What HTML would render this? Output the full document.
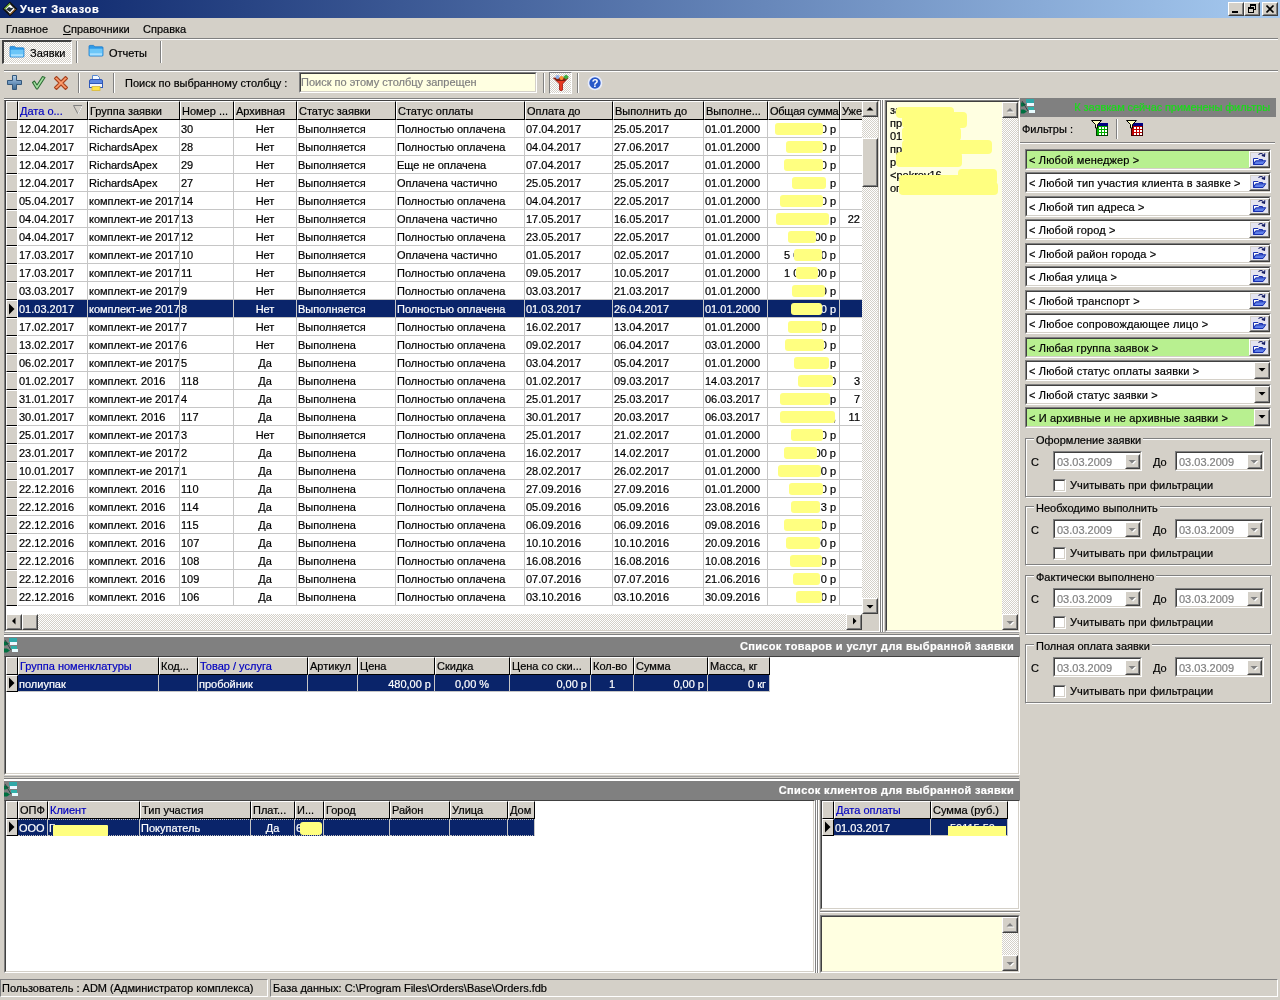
<!DOCTYPE html><html lang="ru"><head><meta charset="utf-8"><title>Учет Заказов</title><style>
*{box-sizing:border-box;margin:0;padding:0}
html,body{width:1280px;height:1000px;overflow:hidden}
body{background:#d4d0c8;font-family:"Liberation Sans",sans-serif;font-size:11px;color:#000;position:relative;line-height:13px;-webkit-text-stroke:0.2px}
.a{position:absolute;white-space:nowrap}
.sunk{position:absolute;border:1px solid;border-color:#808080 #fff #fff #808080}
.sunk2{position:absolute;left:0;top:0;right:0;bottom:0;border:1px solid;border-color:#404040 #d4d0c8 #d4d0c8 #404040}
.rais{position:absolute;border:1px solid;border-color:#fff #404040 #404040 #fff;background:#d4d0c8}
.rais:after{content:"";position:absolute;left:0;top:0;right:0;bottom:0;border:1px solid;border-color:#d4d0c8 #808080 #808080 #d4d0c8}
.hd{position:absolute;background:#d4d0c8;border:1px solid;border-color:#fff #000 #000 #fff;overflow:hidden;white-space:nowrap;padding:3px 0 0 1px;height:19px}
.hd.s{height:18px;padding-top:2px}
.hd.b{color:#0000c0}
.c{position:absolute;overflow:hidden;white-space:nowrap;height:18px;padding:3px 0 0 1px;border-right:1px solid #c6c6c6;border-bottom:1px solid #c6c6c6;background:#fff}
.c.s{height:17px}
.c.ctr{text-align:center;padding-left:0}
.c.rt{text-align:right;padding-right:3px}
.sel .c{background:#0a246a;color:#fff}
.ind{position:absolute;background:#d4d0c8;border:1px solid;border-color:#fff #000 #000 #fff}
.sbtrack{position:absolute;background-color:#fff;background-image:linear-gradient(45deg,#d4d0c8 25%,transparent 25%,transparent 75%,#d4d0c8 75%),linear-gradient(45deg,#d4d0c8 25%,transparent 25%,transparent 75%,#d4d0c8 75%);background-size:2px 2px;background-position:0 0,1px 1px}
.yl{position:absolute;background:#ffff80;border-radius:3px}
.gbar{position:absolute;background:#808080;color:#fff;font-weight:bold;text-align:right;height:19px;padding:3px 6px 0 0;letter-spacing:0.35px}
.grp{position:absolute;border:1px solid;border-color:#808080 #fff #fff #808080;box-shadow:inset 1px 1px 0 #fff,-1px -1px 0 transparent}
.grp:before{content:"";position:absolute;left:-1px;top:-1px;right:0;bottom:0;border:1px solid;border-color:transparent #808080 #808080 transparent}
.grp>span{position:absolute;left:8px;top:-5px;background:#d4d0c8;padding:0 2px;z-index:2}
.vl{position:absolute;width:1px}
.hl{position:absolute;height:1px}
</style></head><body><div id="w" style="position:absolute;left:0;top:0;width:1280px;height:1000px;will-change:transform">
<div class="a" style="left:0;top:0;width:1280px;height:18px;background:linear-gradient(90deg,#0a246a 0%,#a6caf0 100%)"></div>
<svg class="a" style="left:2px;top:1px" width="16" height="16" viewBox="0 0 16 16"><polygon points="8,0.5 15.5,8 8,15.5 0.5,8" fill="#111"/><polygon points="8,3.200 12.800,8 8,12.800 3.200,8" fill="#fff"/><path d="M4 8.500 L7 6 L9 7 L12 6.500 L8 11Z" fill="#26323e"/><path d="M2.500 8 L8 2.500" stroke="#7fbf3f" stroke-width="1.2" fill="none"/><path d="M8 13.500 L13.500 8" stroke="#d08030" stroke-width="1" fill="none"/></svg>
<div class="a" style="left:20px;top:3px;color:#fff;font-weight:bold;font-size:11px;letter-spacing:0.7px">Учет Заказов</div>
<div class="rais" style="left:1228px;top:2px;width:16px;height:14px"><div class="a" style="left:3px;top:8px;width:6px;height:2px;background:#000"></div></div>
<div class="rais" style="left:1244px;top:2px;width:16px;height:14px"><div class="a" style="left:5px;top:1px;width:6px;height:6px;border:1px solid #000;border-top-width:2px"></div><div class="a" style="left:3px;top:4px;width:6px;height:6px;border:1px solid #000;border-top-width:2px;background:#d4d0c8"></div></div>
<div class="rais" style="left:1262px;top:2px;width:16px;height:14px"><svg class="a" style="left:3px;top:2px" width="9" height="8" viewBox="0 0 9 8"><path d="M0.5 0.5 L7.5 7.5 M7.5 0.5 L0.5 7.5" stroke="#000" stroke-width="1.6"/></svg></div>
<div class="a" style="left:6px;top:23px">Главное</div>
<div class="a" style="left:63px;top:23px"><u>С</u>правочники</div>
<div class="a" style="left:143px;top:23px">Справка</div>
<div class="hl" style="left:0px;top:38px;width:1278px;background:#808080"></div><div class="hl" style="left:0px;top:39px;width:1278px;background:#fff"></div>
<div class="sbtrack" style="left:2px;top:40px;width:70px;height:24px;border-style:solid;border-width:2px 1px 1px 2px;border-color:#404040 #fff #fff #404040"></div>
<svg class="a" style="left:9px;top:45px" width="16" height="13" viewBox="0 0 16 14" preserveAspectRatio="none"><path d="M1 2.5 Q1 1.5 2 1.5 L5.5 1.5 L7 3 L14 3 Q15 3 15 4 L15 12 Q15 13 14 13 L2 13 Q1 13 1 12Z" fill="#2f9be8" stroke="#1a78c8" stroke-width="0.8"/><path d="M1.5 5 L14.5 5 L14.5 12 Q14.5 12.5 14 12.5 L2 12.5 Q1.5 12.5 1.5 12Z" fill="#6cc6f8"/><path d="M2 10 L14 10 L14 12.3 L2 12.3Z" fill="#a8e0ff"/></svg>
<div class="a" style="left:30px;top:47px">Заявки</div>
<div class="vl" style="left:76px;top:41px;height:22px;background:#808080"></div><div class="vl" style="left:77px;top:41px;height:22px;background:#fff"></div>
<svg class="a" style="left:88px;top:44px" width="16" height="13" viewBox="0 0 16 14" preserveAspectRatio="none"><path d="M1 2.5 Q1 1.5 2 1.5 L5.5 1.5 L7 3 L14 3 Q15 3 15 4 L15 12 Q15 13 14 13 L2 13 Q1 13 1 12Z" fill="#2f9be8" stroke="#1a78c8" stroke-width="0.8"/><path d="M1.5 5 L14.5 5 L14.5 12 Q14.5 12.5 14 12.5 L2 12.5 Q1.5 12.5 1.5 12Z" fill="#6cc6f8"/><path d="M2 10 L14 10 L14 12.3 L2 12.3Z" fill="#a8e0ff"/></svg>
<div class="a" style="left:109px;top:47px">Отчеты</div>
<div class="vl" style="left:160px;top:41px;height:22px;background:#808080"></div><div class="vl" style="left:161px;top:41px;height:22px;background:#fff"></div>
<div class="hl" style="left:4px;top:70px;width:1274px;background:#808080"></div><div class="hl" style="left:4px;top:71px;width:1274px;background:#fff"></div>
<svg class="a" style="left:7px;top:75px" width="16" height="16" viewBox="0 0 16 16"><defs><linearGradient id="gp" x1="0" y1="0" x2="0" y2="1"><stop offset="0" stop-color="#b8d4ec"/><stop offset="0.5" stop-color="#7098c0"/><stop offset="1" stop-color="#3c6890"/></linearGradient></defs><path d="M5.500 0.500 H9.500 V5.500 H14.500 V9.500 H9.500 V14.500 H5.500 V9.500 H0.500 V5.500 H5.500Z" fill="url(#gp)" stroke="#34587c" stroke-width="1"/></svg>
<svg class="a" style="left:31px;top:75px" width="16" height="16" viewBox="0 0 16 16"><path d="M1.500 7.500 L3.500 6 L6 10 L11.500 1.500 L14 2.500 L6.500 14 L5.500 14Z" fill="#a4e0a0" stroke="#2c6c34" stroke-width="1.1" stroke-linejoin="round"/></svg>
<svg class="a" style="left:53px;top:75px" width="16" height="16" viewBox="0 0 16 16"><path d="M1.500 3.500 L3.500 1.500 L8 6 L12.500 1.500 L14.500 3.500 L10 8 L14.500 12.500 L12.500 14.500 L8 10 L3.500 14.500 L1.500 12.500 L6 8Z" fill="#ff9c6c" stroke="#a84420" stroke-width="1.1" stroke-linejoin="round"/></svg>
<div class="vl" style="left:78px;top:73px;height:20px;background:#808080"></div><div class="vl" style="left:79px;top:73px;height:20px;background:#fff"></div>
<svg class="a" style="left:88px;top:75px" width="16" height="17" viewBox="0 0 16 17"><path d="M4.500 4.500 V0.500 H9.500 L11.500 2.500 V4.500Z" fill="#f4faff" stroke="#5888d0" stroke-width="1"/><rect x="1.500" y="4.500" width="13" height="5" rx="1.500" fill="#5c88e4" stroke="#3058b8" stroke-width="1"/><rect x="1.500" y="8.500" width="13" height="4" fill="#f0f4ff" stroke="#3058b8" stroke-width="1"/><rect x="4" y="11.500" width="8" height="4" fill="#ffe448" stroke="#d8b838" stroke-width="0.8"/></svg>
<div class="vl" style="left:113px;top:73px;height:20px;background:#808080"></div><div class="vl" style="left:114px;top:73px;height:20px;background:#fff"></div>
<div class="a" style="left:125px;top:77px">Поиск по выбранному столбцу :</div>
<div class="sunk" style="left:299px;top:72px;width:238px;height:21px;background:#ffffe1"><div class="sunk2"></div><div class="a" style="left:1px;top:3px;color:#808080">Поиск по этому столбцу запрещен</div></div>
<div class="vl" style="left:543px;top:73px;height:20px;background:#808080"></div><div class="vl" style="left:544px;top:73px;height:20px;background:#fff"></div>
<div class="sbtrack" style="left:549px;top:72px;width:23px;height:22px;border:1px solid;border-color:#808080 #fff #fff #808080"></div>
<svg class="a" style="left:552px;top:74px" width="18" height="18" viewBox="0 0 18 18"><path d="M1.500 4 L16 4 L10.500 10 L10.500 16 Q9 17.500 7.500 16 L7.500 10Z" fill="#e83820" stroke="#a01810" stroke-width="0.8"/><path d="M1.500 4 L16 4 L13 7 L4.500 7Z" fill="#802010"/><circle cx="5.500" cy="3" r="2" fill="#90b0e8"/><circle cx="9.500" cy="4" r="2" fill="#ff9030"/><path d="M14 0.500 L17 3 L14 5.500 L11 3Z" fill="#40b040"/></svg>
<div class="vl" style="left:577px;top:73px;height:20px;background:#808080"></div><div class="vl" style="left:578px;top:73px;height:20px;background:#fff"></div>
<svg class="a" style="left:587px;top:75px" width="16" height="16" viewBox="0 0 16 16"><circle cx="8" cy="8" r="6.500" fill="#2858c8" stroke="#e8eeff" stroke-width="1.6"/><text x="8" y="12" font-size="11" font-weight="bold" font-family="Liberation Sans, sans-serif" text-anchor="middle" fill="#fff">?</text></svg>
<div class="hl" style="left:4px;top:98px;width:1015px;background:#808080"></div><div class="hl" style="left:4px;top:99px;width:1015px;background:#fff"></div>
<div class="a" style="left:4px;top:100px;width:876px;height:532px;background:#fff;border-style:solid;border-width:1px;border-color:#404040 #fff #fff #808080"><div class="a" style="left:0;top:0;right:0;bottom:0;border-style:solid;border-width:0 1px 1px 1px;border-color:#404040 #d4d0c8 #d4d0c8 #404040"></div></div>
<div class="vl" style="left:880px;top:100px;height:532px;background:#808080"></div><div class="vl" style="left:881px;top:100px;height:532px;background:#fff"></div>
<div class="vl" style="left:882px;top:100px;height:532px;background:#808080"></div><div class="vl" style="left:883px;top:100px;height:532px;background:#fff"></div>
<div class="hd " style="left:6px;top:101px;width:12px"></div>
<div class="hd b " style="left:18px;top:101px;width:70px;">Дата о...</div>
<div class="hd  " style="left:88px;top:101px;width:92px;">Группа заявки</div>
<div class="hd  " style="left:180px;top:101px;width:54px;">Номер ...</div>
<div class="hd  " style="left:234px;top:101px;width:63px;">Архивная</div>
<div class="hd  " style="left:297px;top:101px;width:99px;">Статус заявки</div>
<div class="hd  " style="left:396px;top:101px;width:129px;">Статус оплаты</div>
<div class="hd  " style="left:525px;top:101px;width:88px;">Оплата до</div>
<div class="hd  " style="left:613px;top:101px;width:91px;">Выполнить до</div>
<div class="hd  " style="left:704px;top:101px;width:64px;">Выполне...</div>
<div class="hd  " style="left:768px;top:101px;width:72px;letter-spacing:-0.25px;">Общая сумма</div>
<div class="hd  " style="left:840px;top:101px;width:23px;">Уже</div>
<svg class="a" style="left:73px;top:105px" width="11" height="10" viewBox="0 0 11 10"><path d="M0.5 0.5 L9.5 0.5 L5 9Z" fill="none" stroke="#808080" stroke-width="1"/><path d="M9.5 0.5 L5 9" stroke="#fff" stroke-width="1"/></svg>
<div class="">
<div class="ind" style="left:6px;top:120px;width:11px;height:18px;border-right:none"></div>
<div class="c" style="left:18px;top:120px;width:70px;">12.04.2017</div>
<div class="c" style="left:88px;top:120px;width:92px;">RichardsApex</div>
<div class="c" style="left:180px;top:120px;width:54px;">30</div>
<div class="c ctr" style="left:234px;top:120px;width:63px;">Нет</div>
<div class="c" style="left:297px;top:120px;width:99px;">Выполняется</div>
<div class="c" style="left:396px;top:120px;width:129px;">Полностью оплачена</div>
<div class="c" style="left:525px;top:120px;width:88px;">07.04.2017</div>
<div class="c" style="left:613px;top:120px;width:91px;">25.05.2017</div>
<div class="c" style="left:704px;top:120px;width:64px;">01.01.2000</div>
<div class="c rt" style="left:768px;top:120px;width:72px;">0 р</div>
<div class="c rt" style="left:840px;top:120px;width:23px;border-right:none;padding-right:2px;width:22px;"></div>
</div>
<div class="yl" style="left:775px;top:123px;width:48px;height:12px"></div>
<div class="">
<div class="ind" style="left:6px;top:138px;width:11px;height:18px;border-right:none"></div>
<div class="c" style="left:18px;top:138px;width:70px;">12.04.2017</div>
<div class="c" style="left:88px;top:138px;width:92px;">RichardsApex</div>
<div class="c" style="left:180px;top:138px;width:54px;">28</div>
<div class="c ctr" style="left:234px;top:138px;width:63px;">Нет</div>
<div class="c" style="left:297px;top:138px;width:99px;">Выполняется</div>
<div class="c" style="left:396px;top:138px;width:129px;">Полностью оплачена</div>
<div class="c" style="left:525px;top:138px;width:88px;">04.04.2017</div>
<div class="c" style="left:613px;top:138px;width:91px;">27.06.2017</div>
<div class="c" style="left:704px;top:138px;width:64px;">01.01.2000</div>
<div class="c rt" style="left:768px;top:138px;width:72px;">0 р</div>
<div class="c rt" style="left:840px;top:138px;width:23px;border-right:none;padding-right:2px;width:22px;"></div>
</div>
<div class="yl" style="left:786px;top:141px;width:37px;height:12px"></div>
<div class="">
<div class="ind" style="left:6px;top:156px;width:11px;height:18px;border-right:none"></div>
<div class="c" style="left:18px;top:156px;width:70px;">12.04.2017</div>
<div class="c" style="left:88px;top:156px;width:92px;">RichardsApex</div>
<div class="c" style="left:180px;top:156px;width:54px;">29</div>
<div class="c ctr" style="left:234px;top:156px;width:63px;">Нет</div>
<div class="c" style="left:297px;top:156px;width:99px;">Выполняется</div>
<div class="c" style="left:396px;top:156px;width:129px;">Еще не оплачена</div>
<div class="c" style="left:525px;top:156px;width:88px;">07.04.2017</div>
<div class="c" style="left:613px;top:156px;width:91px;">25.05.2017</div>
<div class="c" style="left:704px;top:156px;width:64px;">01.01.2000</div>
<div class="c rt" style="left:768px;top:156px;width:72px;">0 р</div>
<div class="c rt" style="left:840px;top:156px;width:23px;border-right:none;padding-right:2px;width:22px;"></div>
</div>
<div class="yl" style="left:784px;top:159px;width:39px;height:12px"></div>
<div class="">
<div class="ind" style="left:6px;top:174px;width:11px;height:18px;border-right:none"></div>
<div class="c" style="left:18px;top:174px;width:70px;">12.04.2017</div>
<div class="c" style="left:88px;top:174px;width:92px;">RichardsApex</div>
<div class="c" style="left:180px;top:174px;width:54px;">27</div>
<div class="c ctr" style="left:234px;top:174px;width:63px;">Нет</div>
<div class="c" style="left:297px;top:174px;width:99px;">Выполняется</div>
<div class="c" style="left:396px;top:174px;width:129px;">Оплачена частично</div>
<div class="c" style="left:525px;top:174px;width:88px;">25.05.2017</div>
<div class="c" style="left:613px;top:174px;width:91px;">25.05.2017</div>
<div class="c" style="left:704px;top:174px;width:64px;">01.01.2000</div>
<div class="c rt" style="left:768px;top:174px;width:72px;">р</div>
<div class="c rt" style="left:840px;top:174px;width:23px;border-right:none;padding-right:2px;width:22px;"></div>
</div>
<div class="yl" style="left:792px;top:177px;width:34px;height:12px"></div>
<div class="">
<div class="ind" style="left:6px;top:192px;width:11px;height:18px;border-right:none"></div>
<div class="c" style="left:18px;top:192px;width:70px;">05.04.2017</div>
<div class="c" style="left:88px;top:192px;width:92px;">комплект-ие 2017</div>
<div class="c" style="left:180px;top:192px;width:54px;">14</div>
<div class="c ctr" style="left:234px;top:192px;width:63px;">Нет</div>
<div class="c" style="left:297px;top:192px;width:99px;">Выполняется</div>
<div class="c" style="left:396px;top:192px;width:129px;">Полностью оплачена</div>
<div class="c" style="left:525px;top:192px;width:88px;">04.04.2017</div>
<div class="c" style="left:613px;top:192px;width:91px;">22.05.2017</div>
<div class="c" style="left:704px;top:192px;width:64px;">01.01.2000</div>
<div class="c rt" style="left:768px;top:192px;width:72px;">0 р</div>
<div class="c rt" style="left:840px;top:192px;width:23px;border-right:none;padding-right:2px;width:22px;"></div>
</div>
<div class="yl" style="left:780px;top:195px;width:43px;height:12px"></div>
<div class="">
<div class="ind" style="left:6px;top:210px;width:11px;height:18px;border-right:none"></div>
<div class="c" style="left:18px;top:210px;width:70px;">04.04.2017</div>
<div class="c" style="left:88px;top:210px;width:92px;">комплект-ие 2017</div>
<div class="c" style="left:180px;top:210px;width:54px;">13</div>
<div class="c ctr" style="left:234px;top:210px;width:63px;">Нет</div>
<div class="c" style="left:297px;top:210px;width:99px;">Выполняется</div>
<div class="c" style="left:396px;top:210px;width:129px;">Оплачена частично</div>
<div class="c" style="left:525px;top:210px;width:88px;">17.05.2017</div>
<div class="c" style="left:613px;top:210px;width:91px;">16.05.2017</div>
<div class="c" style="left:704px;top:210px;width:64px;">01.01.2000</div>
<div class="c rt" style="left:768px;top:210px;width:72px;">р</div>
<div class="c rt" style="left:840px;top:210px;width:23px;border-right:none;padding-right:2px;width:22px;">22</div>
</div>
<div class="yl" style="left:776px;top:213px;width:53px;height:12px"></div>
<div class="">
<div class="ind" style="left:6px;top:228px;width:11px;height:18px;border-right:none"></div>
<div class="c" style="left:18px;top:228px;width:70px;">04.04.2017</div>
<div class="c" style="left:88px;top:228px;width:92px;">комплект-ие 2017</div>
<div class="c" style="left:180px;top:228px;width:54px;">12</div>
<div class="c ctr" style="left:234px;top:228px;width:63px;">Нет</div>
<div class="c" style="left:297px;top:228px;width:99px;">Выполняется</div>
<div class="c" style="left:396px;top:228px;width:129px;">Полностью оплачена</div>
<div class="c" style="left:525px;top:228px;width:88px;">23.05.2017</div>
<div class="c" style="left:613px;top:228px;width:91px;">22.05.2017</div>
<div class="c" style="left:704px;top:228px;width:64px;">01.01.2000</div>
<div class="c rt" style="left:768px;top:228px;width:72px;">00 р</div>
<div class="c rt" style="left:840px;top:228px;width:23px;border-right:none;padding-right:2px;width:22px;"></div>
</div>
<div class="yl" style="left:788px;top:231px;width:28px;height:12px"></div>
<div class="">
<div class="ind" style="left:6px;top:246px;width:11px;height:18px;border-right:none"></div>
<div class="c" style="left:18px;top:246px;width:70px;">17.03.2017</div>
<div class="c" style="left:88px;top:246px;width:92px;">комплект-ие 2017</div>
<div class="c" style="left:180px;top:246px;width:54px;">10</div>
<div class="c ctr" style="left:234px;top:246px;width:63px;">Нет</div>
<div class="c" style="left:297px;top:246px;width:99px;">Выполняется</div>
<div class="c" style="left:396px;top:246px;width:129px;">Оплачена частично</div>
<div class="c" style="left:525px;top:246px;width:88px;">01.05.2017</div>
<div class="c" style="left:613px;top:246px;width:91px;">02.05.2017</div>
<div class="c" style="left:704px;top:246px;width:64px;">01.01.2000</div>
<div class="c rt" style="left:768px;top:246px;width:72px;">5 000,00 р</div>
<div class="c rt" style="left:840px;top:246px;width:23px;border-right:none;padding-right:2px;width:22px;"></div>
</div>
<div class="yl" style="left:794px;top:249px;width:28px;height:12px"></div>
<div class="">
<div class="ind" style="left:6px;top:264px;width:11px;height:18px;border-right:none"></div>
<div class="c" style="left:18px;top:264px;width:70px;">17.03.2017</div>
<div class="c" style="left:88px;top:264px;width:92px;">комплект-ие 2017</div>
<div class="c" style="left:180px;top:264px;width:54px;">11</div>
<div class="c ctr" style="left:234px;top:264px;width:63px;">Нет</div>
<div class="c" style="left:297px;top:264px;width:99px;">Выполняется</div>
<div class="c" style="left:396px;top:264px;width:129px;">Полностью оплачена</div>
<div class="c" style="left:525px;top:264px;width:88px;">09.05.2017</div>
<div class="c" style="left:613px;top:264px;width:91px;">10.05.2017</div>
<div class="c" style="left:704px;top:264px;width:64px;">01.01.2000</div>
<div class="c rt" style="left:768px;top:264px;width:72px;">1 000,00 р</div>
<div class="c rt" style="left:840px;top:264px;width:23px;border-right:none;padding-right:2px;width:22px;"></div>
</div>
<div class="yl" style="left:796px;top:267px;width:22px;height:12px"></div>
<div class="">
<div class="ind" style="left:6px;top:282px;width:11px;height:18px;border-right:none"></div>
<div class="c" style="left:18px;top:282px;width:70px;">03.03.2017</div>
<div class="c" style="left:88px;top:282px;width:92px;">комплект-ие 2017</div>
<div class="c" style="left:180px;top:282px;width:54px;">9</div>
<div class="c ctr" style="left:234px;top:282px;width:63px;">Нет</div>
<div class="c" style="left:297px;top:282px;width:99px;">Выполняется</div>
<div class="c" style="left:396px;top:282px;width:129px;">Полностью оплачена</div>
<div class="c" style="left:525px;top:282px;width:88px;">03.03.2017</div>
<div class="c" style="left:613px;top:282px;width:91px;">21.03.2017</div>
<div class="c" style="left:704px;top:282px;width:64px;">01.01.2000</div>
<div class="c rt" style="left:768px;top:282px;width:72px;">0 р</div>
<div class="c rt" style="left:840px;top:282px;width:23px;border-right:none;padding-right:2px;width:22px;"></div>
</div>
<div class="yl" style="left:792px;top:285px;width:33px;height:12px"></div>
<div class="sel">
<div class="ind" style="left:6px;top:300px;width:11px;height:18px;border-right:none"></div>
<svg class="a" style="left:8px;top:303px" width="7" height="12" viewBox="0 0 7 12"><path d="M1 0.5 L6.5 6 L1 11.5Z" fill="#000"/></svg>
<div class="c" style="left:18px;top:300px;width:70px;">01.03.2017</div>
<div class="c" style="left:88px;top:300px;width:92px;">комплект-ие 2017</div>
<div class="c" style="left:180px;top:300px;width:54px;">8</div>
<div class="c ctr" style="left:234px;top:300px;width:63px;">Нет</div>
<div class="c" style="left:297px;top:300px;width:99px;">Выполняется</div>
<div class="c" style="left:396px;top:300px;width:129px;">Полностью оплачена</div>
<div class="c" style="left:525px;top:300px;width:88px;">01.03.2017</div>
<div class="c" style="left:613px;top:300px;width:91px;">26.04.2017</div>
<div class="c" style="left:704px;top:300px;width:64px;">01.01.2000</div>
<div class="c rt" style="left:768px;top:300px;width:72px;">0 р</div>
<div class="c rt" style="left:840px;top:300px;width:23px;border-right:none;padding-right:2px;width:22px;"></div>
</div>
<div class="yl" style="left:791px;top:303px;width:31px;height:12px"></div>
<div class="">
<div class="ind" style="left:6px;top:318px;width:11px;height:18px;border-right:none"></div>
<div class="c" style="left:18px;top:318px;width:70px;">17.02.2017</div>
<div class="c" style="left:88px;top:318px;width:92px;">комплект-ие 2017</div>
<div class="c" style="left:180px;top:318px;width:54px;">7</div>
<div class="c ctr" style="left:234px;top:318px;width:63px;">Нет</div>
<div class="c" style="left:297px;top:318px;width:99px;">Выполняется</div>
<div class="c" style="left:396px;top:318px;width:129px;">Полностью оплачена</div>
<div class="c" style="left:525px;top:318px;width:88px;">16.02.2017</div>
<div class="c" style="left:613px;top:318px;width:91px;">13.04.2017</div>
<div class="c" style="left:704px;top:318px;width:64px;">01.01.2000</div>
<div class="c rt" style="left:768px;top:318px;width:72px;">0 р</div>
<div class="c rt" style="left:840px;top:318px;width:23px;border-right:none;padding-right:2px;width:22px;"></div>
</div>
<div class="yl" style="left:788px;top:321px;width:34px;height:12px"></div>
<div class="">
<div class="ind" style="left:6px;top:336px;width:11px;height:18px;border-right:none"></div>
<div class="c" style="left:18px;top:336px;width:70px;">13.02.2017</div>
<div class="c" style="left:88px;top:336px;width:92px;">комплект-ие 2017</div>
<div class="c" style="left:180px;top:336px;width:54px;">6</div>
<div class="c ctr" style="left:234px;top:336px;width:63px;">Нет</div>
<div class="c" style="left:297px;top:336px;width:99px;">Выполнена</div>
<div class="c" style="left:396px;top:336px;width:129px;">Полностью оплачена</div>
<div class="c" style="left:525px;top:336px;width:88px;">09.02.2017</div>
<div class="c" style="left:613px;top:336px;width:91px;">06.04.2017</div>
<div class="c" style="left:704px;top:336px;width:64px;">03.01.2000</div>
<div class="c rt" style="left:768px;top:336px;width:72px;">0 р</div>
<div class="c rt" style="left:840px;top:336px;width:23px;border-right:none;padding-right:2px;width:22px;"></div>
</div>
<div class="yl" style="left:785px;top:339px;width:39px;height:12px"></div>
<div class="">
<div class="ind" style="left:6px;top:354px;width:11px;height:18px;border-right:none"></div>
<div class="c" style="left:18px;top:354px;width:70px;">06.02.2017</div>
<div class="c" style="left:88px;top:354px;width:92px;">комплект-ие 2017</div>
<div class="c" style="left:180px;top:354px;width:54px;">5</div>
<div class="c ctr" style="left:234px;top:354px;width:63px;">Да</div>
<div class="c" style="left:297px;top:354px;width:99px;">Выполнена</div>
<div class="c" style="left:396px;top:354px;width:129px;">Полностью оплачена</div>
<div class="c" style="left:525px;top:354px;width:88px;">03.04.2017</div>
<div class="c" style="left:613px;top:354px;width:91px;">05.04.2017</div>
<div class="c" style="left:704px;top:354px;width:64px;">01.01.2000</div>
<div class="c rt" style="left:768px;top:354px;width:72px;">р</div>
<div class="c rt" style="left:840px;top:354px;width:23px;border-right:none;padding-right:2px;width:22px;"></div>
</div>
<div class="yl" style="left:794px;top:357px;width:35px;height:12px"></div>
<div class="">
<div class="ind" style="left:6px;top:372px;width:11px;height:18px;border-right:none"></div>
<div class="c" style="left:18px;top:372px;width:70px;">01.02.2017</div>
<div class="c" style="left:88px;top:372px;width:92px;">комплект. 2016</div>
<div class="c" style="left:180px;top:372px;width:54px;">118</div>
<div class="c ctr" style="left:234px;top:372px;width:63px;">Да</div>
<div class="c" style="left:297px;top:372px;width:99px;">Выполнена</div>
<div class="c" style="left:396px;top:372px;width:129px;">Полностью оплачена</div>
<div class="c" style="left:525px;top:372px;width:88px;">01.02.2017</div>
<div class="c" style="left:613px;top:372px;width:91px;">09.03.2017</div>
<div class="c" style="left:704px;top:372px;width:64px;">14.03.2017</div>
<div class="c rt" style="left:768px;top:372px;width:72px;">6 000,0</div>
<div class="c rt" style="left:840px;top:372px;width:23px;border-right:none;padding-right:2px;width:22px;">3</div>
</div>
<div class="yl" style="left:798px;top:375px;width:35px;height:12px"></div>
<div class="">
<div class="ind" style="left:6px;top:390px;width:11px;height:18px;border-right:none"></div>
<div class="c" style="left:18px;top:390px;width:70px;">31.01.2017</div>
<div class="c" style="left:88px;top:390px;width:92px;">комплект-ие 2017</div>
<div class="c" style="left:180px;top:390px;width:54px;">4</div>
<div class="c ctr" style="left:234px;top:390px;width:63px;">Да</div>
<div class="c" style="left:297px;top:390px;width:99px;">Выполнена</div>
<div class="c" style="left:396px;top:390px;width:129px;">Полностью оплачена</div>
<div class="c" style="left:525px;top:390px;width:88px;">25.01.2017</div>
<div class="c" style="left:613px;top:390px;width:91px;">25.03.2017</div>
<div class="c" style="left:704px;top:390px;width:64px;">06.03.2017</div>
<div class="c rt" style="left:768px;top:390px;width:72px;">р</div>
<div class="c rt" style="left:840px;top:390px;width:23px;border-right:none;padding-right:2px;width:22px;">7</div>
</div>
<div class="yl" style="left:780px;top:393px;width:50px;height:12px"></div>
<div class="">
<div class="ind" style="left:6px;top:408px;width:11px;height:18px;border-right:none"></div>
<div class="c" style="left:18px;top:408px;width:70px;">30.01.2017</div>
<div class="c" style="left:88px;top:408px;width:92px;">комплект. 2016</div>
<div class="c" style="left:180px;top:408px;width:54px;">117</div>
<div class="c ctr" style="left:234px;top:408px;width:63px;">Да</div>
<div class="c" style="left:297px;top:408px;width:99px;">Выполнена</div>
<div class="c" style="left:396px;top:408px;width:129px;">Полностью оплачена</div>
<div class="c" style="left:525px;top:408px;width:88px;">30.01.2017</div>
<div class="c" style="left:613px;top:408px;width:91px;">20.03.2017</div>
<div class="c" style="left:704px;top:408px;width:64px;">06.03.2017</div>
<div class="c rt" style="left:768px;top:408px;width:72px;">100 000,</div>
<div class="c rt" style="left:840px;top:408px;width:23px;border-right:none;padding-right:2px;width:22px;">11</div>
</div>
<div class="yl" style="left:780px;top:411px;width:55px;height:12px"></div>
<div class="">
<div class="ind" style="left:6px;top:426px;width:11px;height:18px;border-right:none"></div>
<div class="c" style="left:18px;top:426px;width:70px;">25.01.2017</div>
<div class="c" style="left:88px;top:426px;width:92px;">комплект-ие 2017</div>
<div class="c" style="left:180px;top:426px;width:54px;">3</div>
<div class="c ctr" style="left:234px;top:426px;width:63px;">Нет</div>
<div class="c" style="left:297px;top:426px;width:99px;">Выполняется</div>
<div class="c" style="left:396px;top:426px;width:129px;">Полностью оплачена</div>
<div class="c" style="left:525px;top:426px;width:88px;">25.01.2017</div>
<div class="c" style="left:613px;top:426px;width:91px;">21.02.2017</div>
<div class="c" style="left:704px;top:426px;width:64px;">01.01.2000</div>
<div class="c rt" style="left:768px;top:426px;width:72px;">0 р</div>
<div class="c rt" style="left:840px;top:426px;width:23px;border-right:none;padding-right:2px;width:22px;"></div>
</div>
<div class="yl" style="left:791px;top:429px;width:32px;height:12px"></div>
<div class="">
<div class="ind" style="left:6px;top:444px;width:11px;height:18px;border-right:none"></div>
<div class="c" style="left:18px;top:444px;width:70px;">23.01.2017</div>
<div class="c" style="left:88px;top:444px;width:92px;">комплект-ие 2017</div>
<div class="c" style="left:180px;top:444px;width:54px;">2</div>
<div class="c ctr" style="left:234px;top:444px;width:63px;">Да</div>
<div class="c" style="left:297px;top:444px;width:99px;">Выполнена</div>
<div class="c" style="left:396px;top:444px;width:129px;">Полностью оплачена</div>
<div class="c" style="left:525px;top:444px;width:88px;">16.02.2017</div>
<div class="c" style="left:613px;top:444px;width:91px;">14.02.2017</div>
<div class="c" style="left:704px;top:444px;width:64px;">01.01.2000</div>
<div class="c rt" style="left:768px;top:444px;width:72px;">00 р</div>
<div class="c rt" style="left:840px;top:444px;width:23px;border-right:none;padding-right:2px;width:22px;"></div>
</div>
<div class="yl" style="left:784px;top:447px;width:33px;height:12px"></div>
<div class="">
<div class="ind" style="left:6px;top:462px;width:11px;height:18px;border-right:none"></div>
<div class="c" style="left:18px;top:462px;width:70px;">10.01.2017</div>
<div class="c" style="left:88px;top:462px;width:92px;">комплект-ие 2017</div>
<div class="c" style="left:180px;top:462px;width:54px;">1</div>
<div class="c ctr" style="left:234px;top:462px;width:63px;">Да</div>
<div class="c" style="left:297px;top:462px;width:99px;">Выполнена</div>
<div class="c" style="left:396px;top:462px;width:129px;">Полностью оплачена</div>
<div class="c" style="left:525px;top:462px;width:88px;">28.02.2017</div>
<div class="c" style="left:613px;top:462px;width:91px;">26.02.2017</div>
<div class="c" style="left:704px;top:462px;width:64px;">01.01.2000</div>
<div class="c rt" style="left:768px;top:462px;width:72px;">0 р</div>
<div class="c rt" style="left:840px;top:462px;width:23px;border-right:none;padding-right:2px;width:22px;"></div>
</div>
<div class="yl" style="left:778px;top:465px;width:43px;height:12px"></div>
<div class="">
<div class="ind" style="left:6px;top:480px;width:11px;height:18px;border-right:none"></div>
<div class="c" style="left:18px;top:480px;width:70px;">22.12.2016</div>
<div class="c" style="left:88px;top:480px;width:92px;">комплект. 2016</div>
<div class="c" style="left:180px;top:480px;width:54px;">110</div>
<div class="c ctr" style="left:234px;top:480px;width:63px;">Да</div>
<div class="c" style="left:297px;top:480px;width:99px;">Выполнена</div>
<div class="c" style="left:396px;top:480px;width:129px;">Полностью оплачена</div>
<div class="c" style="left:525px;top:480px;width:88px;">27.09.2016</div>
<div class="c" style="left:613px;top:480px;width:91px;">27.09.2016</div>
<div class="c" style="left:704px;top:480px;width:64px;">01.01.2000</div>
<div class="c rt" style="left:768px;top:480px;width:72px;">0 р</div>
<div class="c rt" style="left:840px;top:480px;width:23px;border-right:none;padding-right:2px;width:22px;"></div>
</div>
<div class="yl" style="left:789px;top:483px;width:34px;height:12px"></div>
<div class="">
<div class="ind" style="left:6px;top:498px;width:11px;height:18px;border-right:none"></div>
<div class="c" style="left:18px;top:498px;width:70px;">22.12.2016</div>
<div class="c" style="left:88px;top:498px;width:92px;">комплект. 2016</div>
<div class="c" style="left:180px;top:498px;width:54px;">114</div>
<div class="c ctr" style="left:234px;top:498px;width:63px;">Да</div>
<div class="c" style="left:297px;top:498px;width:99px;">Выполнена</div>
<div class="c" style="left:396px;top:498px;width:129px;">Полностью оплачена</div>
<div class="c" style="left:525px;top:498px;width:88px;">05.09.2016</div>
<div class="c" style="left:613px;top:498px;width:91px;">05.09.2016</div>
<div class="c" style="left:704px;top:498px;width:64px;">23.08.2016</div>
<div class="c rt" style="left:768px;top:498px;width:72px;">3 р</div>
<div class="c rt" style="left:840px;top:498px;width:23px;border-right:none;padding-right:2px;width:22px;"></div>
</div>
<div class="yl" style="left:791px;top:501px;width:29px;height:12px"></div>
<div class="">
<div class="ind" style="left:6px;top:516px;width:11px;height:18px;border-right:none"></div>
<div class="c" style="left:18px;top:516px;width:70px;">22.12.2016</div>
<div class="c" style="left:88px;top:516px;width:92px;">комплект. 2016</div>
<div class="c" style="left:180px;top:516px;width:54px;">115</div>
<div class="c ctr" style="left:234px;top:516px;width:63px;">Да</div>
<div class="c" style="left:297px;top:516px;width:99px;">Выполнена</div>
<div class="c" style="left:396px;top:516px;width:129px;">Полностью оплачена</div>
<div class="c" style="left:525px;top:516px;width:88px;">06.09.2016</div>
<div class="c" style="left:613px;top:516px;width:91px;">06.09.2016</div>
<div class="c" style="left:704px;top:516px;width:64px;">09.08.2016</div>
<div class="c rt" style="left:768px;top:516px;width:72px;">0 р</div>
<div class="c rt" style="left:840px;top:516px;width:23px;border-right:none;padding-right:2px;width:22px;"></div>
</div>
<div class="yl" style="left:784px;top:519px;width:38px;height:12px"></div>
<div class="">
<div class="ind" style="left:6px;top:534px;width:11px;height:18px;border-right:none"></div>
<div class="c" style="left:18px;top:534px;width:70px;">22.12.2016</div>
<div class="c" style="left:88px;top:534px;width:92px;">комплект. 2016</div>
<div class="c" style="left:180px;top:534px;width:54px;">107</div>
<div class="c ctr" style="left:234px;top:534px;width:63px;">Да</div>
<div class="c" style="left:297px;top:534px;width:99px;">Выполнена</div>
<div class="c" style="left:396px;top:534px;width:129px;">Полностью оплачена</div>
<div class="c" style="left:525px;top:534px;width:88px;">10.10.2016</div>
<div class="c" style="left:613px;top:534px;width:91px;">10.10.2016</div>
<div class="c" style="left:704px;top:534px;width:64px;">20.09.2016</div>
<div class="c rt" style="left:768px;top:534px;width:72px;">00 р</div>
<div class="c rt" style="left:840px;top:534px;width:23px;border-right:none;padding-right:2px;width:22px;"></div>
</div>
<div class="yl" style="left:786px;top:537px;width:34px;height:12px"></div>
<div class="">
<div class="ind" style="left:6px;top:552px;width:11px;height:18px;border-right:none"></div>
<div class="c" style="left:18px;top:552px;width:70px;">22.12.2016</div>
<div class="c" style="left:88px;top:552px;width:92px;">комплект. 2016</div>
<div class="c" style="left:180px;top:552px;width:54px;">108</div>
<div class="c ctr" style="left:234px;top:552px;width:63px;">Да</div>
<div class="c" style="left:297px;top:552px;width:99px;">Выполнена</div>
<div class="c" style="left:396px;top:552px;width:129px;">Полностью оплачена</div>
<div class="c" style="left:525px;top:552px;width:88px;">16.08.2016</div>
<div class="c" style="left:613px;top:552px;width:91px;">16.08.2016</div>
<div class="c" style="left:704px;top:552px;width:64px;">10.08.2016</div>
<div class="c rt" style="left:768px;top:552px;width:72px;">0 р</div>
<div class="c rt" style="left:840px;top:552px;width:23px;border-right:none;padding-right:2px;width:22px;"></div>
</div>
<div class="yl" style="left:790px;top:555px;width:32px;height:12px"></div>
<div class="">
<div class="ind" style="left:6px;top:570px;width:11px;height:18px;border-right:none"></div>
<div class="c" style="left:18px;top:570px;width:70px;">22.12.2016</div>
<div class="c" style="left:88px;top:570px;width:92px;">комплект. 2016</div>
<div class="c" style="left:180px;top:570px;width:54px;">109</div>
<div class="c ctr" style="left:234px;top:570px;width:63px;">Да</div>
<div class="c" style="left:297px;top:570px;width:99px;">Выполнена</div>
<div class="c" style="left:396px;top:570px;width:129px;">Полностью оплачена</div>
<div class="c" style="left:525px;top:570px;width:88px;">07.07.2016</div>
<div class="c" style="left:613px;top:570px;width:91px;">07.07.2016</div>
<div class="c" style="left:704px;top:570px;width:64px;">21.06.2016</div>
<div class="c rt" style="left:768px;top:570px;width:72px;">0 р</div>
<div class="c rt" style="left:840px;top:570px;width:23px;border-right:none;padding-right:2px;width:22px;"></div>
</div>
<div class="yl" style="left:793px;top:573px;width:27px;height:12px"></div>
<div class="">
<div class="ind" style="left:6px;top:588px;width:11px;height:18px;border-right:none"></div>
<div class="c" style="left:18px;top:588px;width:70px;">22.12.2016</div>
<div class="c" style="left:88px;top:588px;width:92px;">комплект. 2016</div>
<div class="c" style="left:180px;top:588px;width:54px;">106</div>
<div class="c ctr" style="left:234px;top:588px;width:63px;">Да</div>
<div class="c" style="left:297px;top:588px;width:99px;">Выполнена</div>
<div class="c" style="left:396px;top:588px;width:129px;">Полностью оплачена</div>
<div class="c" style="left:525px;top:588px;width:88px;">03.10.2016</div>
<div class="c" style="left:613px;top:588px;width:91px;">03.10.2016</div>
<div class="c" style="left:704px;top:588px;width:64px;">30.09.2016</div>
<div class="c rt" style="left:768px;top:588px;width:72px;">0 р</div>
<div class="c rt" style="left:840px;top:588px;width:23px;border-right:none;padding-right:2px;width:22px;"></div>
</div>
<div class="yl" style="left:796px;top:591px;width:26px;height:12px"></div>
<div class="sbtrack" style="left:862px;top:101px;width:16px;height:513px"></div>
<div class="rais" style="left:862px;top:101px;width:16px;height:16px"><svg class="a" style="left:3px;top:3px" width="9" height="8" viewBox="0 0 9 8"><path d="M0.5 5.5 L4 2 L7.5 5.5Z" fill="#000"/></svg></div>
<div class="rais" style="left:862px;top:598px;width:16px;height:16px"><svg class="a" style="left:3px;top:4px" width="9" height="8" viewBox="0 0 9 8"><path d="M0.5 2 L7.5 2 L4 5.5Z" fill="#000"/></svg></div>
<div class="rais" style="left:862px;top:138px;width:16px;height:49px"></div>
<div class="sbtrack" style="left:6px;top:614px;width:856px;height:16px"></div>
<div class="rais" style="left:6px;top:614px;width:16px;height:16px"><svg class="a" style="left:3px;top:2px" width="8" height="9" viewBox="0 0 8 9"><path d="M5.5 0.5 L2 4 L5.5 7.5Z" fill="#000"/></svg></div>
<div class="rais" style="left:22px;top:614px;width:16px;height:16px"></div>
<div class="rais" style="left:846px;top:614px;width:16px;height:16px"><svg class="a" style="left:4px;top:2px" width="8" height="9" viewBox="0 0 8 9"><path d="M2 0.5 L5.5 4 L2 7.5Z" fill="#000"/></svg></div>
<div class="a" style="left:862px;top:614px;width:16px;height:16px;background:#d4d0c8"></div>
<div class="sunk" style="left:885px;top:100px;width:135px;height:532px;background:#ffffe1"><div class="sunk2"></div></div>
<div class="a" style="left:890px;top:104px">зап</div>
<div class="a" style="left:890px;top:117px">пр</div>
<div class="a" style="left:890px;top:130px">01</div>
<div class="a" style="left:890px;top:143px">пр</div>
<div class="a" style="left:890px;top:156px">р</div>
<div class="a" style="left:890px;top:169px">&lt;pokrov16</div>
<div class="a" style="left:890px;top:182px">оп</div>
<div class="yl" style="left:896px;top:107px;width:58px;height:11px;border-radius:4px"></div>
<div class="yl" style="left:902px;top:112px;width:65px;height:16px;border-radius:4px"></div>
<div class="yl" style="left:902px;top:127px;width:59px;height:14px;border-radius:4px"></div>
<div class="yl" style="left:902px;top:140px;width:90px;height:14px;border-radius:4px"></div>
<div class="yl" style="left:896px;top:152px;width:66px;height:15px;border-radius:4px"></div>
<div class="yl" style="left:899px;top:175px;width:63px;height:10px;border-radius:4px"></div>
<div class="yl" style="left:958px;top:169px;width:39px;height:16px;border-radius:4px"></div>
<div class="yl" style="left:899px;top:182px;width:99px;height:13px;border-radius:4px"></div>
<div class="sbtrack" style="left:1002px;top:102px;width:16px;height:528px"></div>
<div class="rais" style="left:1002px;top:102px;width:16px;height:16px"><svg class="a" style="left:3px;top:3px" width="9" height="8" viewBox="0 0 9 8"><path d="M1.5 6.5 L5 3 L8.5 6.5Z" fill="#fff"/><path d="M0.5 5.5 L4 2 L7.5 5.5Z" fill="#808080"/></svg></div>
<div class="rais" style="left:1002px;top:614px;width:16px;height:16px"><svg class="a" style="left:3px;top:4px" width="9" height="8" viewBox="0 0 9 8"><path d="M1.5 3 L8.5 3 L5 6.5Z" fill="#fff"/><path d="M0.5 2 L7.5 2 L4 5.5Z" fill="#808080"/></svg></div>
<div class="gbar" style="left:1020px;top:98px;width:256px;color:#18dc18;font-weight:normal;letter-spacing:-0.1px">К заявкам сейчас применены фильтры</div>
<svg class="a" style="left:1021px;top:99px" width="15" height="16" viewBox="0 0 15 16"><rect x="5" y="0" width="8" height="4" fill="#30a8a8"/><rect x="6" y="4" width="7" height="3" fill="#f0f8ff"/><rect x="7" y="8" width="6" height="3" fill="#30b0a8"/><rect x="8" y="11" width="6" height="3" fill="#e8fcff"/><path d="M0 3.500 L2 3.500 L5 5.500 L2 7.500 L0 7.500Z M0 10.500 L3 10.500 L6 12.500 L3 14.500 L0 14.500Z" fill="#007040"/><path d="M1 2 L7 12" stroke="#203838" stroke-width="0.8"/></svg>
<div class="a" style="left:1022px;top:123px">Фильтры :</div>
<svg class="a" style="left:1091px;top:120px" width="17" height="16" viewBox="0 0 17 16"><rect x="5.500" y="3.500" width="11" height="12" fill="#00b000" stroke="#004000" stroke-width="1"/><rect x="5.500" y="3.500" width="11" height="2" fill="#000080" stroke="#000080"/><g fill="#fff"><rect x="8" y="7" width="2" height="2"/><rect x="11" y="7" width="2" height="2"/><rect x="14" y="7" width="2" height="2"/><rect x="8" y="10" width="2" height="2"/><rect x="11" y="10" width="2" height="2"/><rect x="14" y="10" width="2" height="2"/><rect x="8" y="13" width="2" height="2"/><rect x="11" y="13" width="2" height="2"/><rect x="14" y="13" width="2" height="2"/></g><path d="M0.5 0.5 L10.5 0.5 L6.5 4.500 L6.5 8 L4.5 8 L4.5 4.500Z" fill="#ffffc0" stroke="#000" stroke-width="1"/></svg>
<div class="vl" style="left:1116px;top:119px;height:20px;background:#808080"></div><div class="vl" style="left:1117px;top:119px;height:20px;background:#fff"></div>
<svg class="a" style="left:1126px;top:120px" width="17" height="16" viewBox="0 0 17 16"><rect x="5.500" y="3.500" width="11" height="12" fill="#c00000" stroke="#400000" stroke-width="1"/><rect x="5.500" y="3.500" width="11" height="2" fill="#000080" stroke="#000080"/><g fill="#fff"><rect x="8" y="7" width="2" height="2"/><rect x="11" y="7" width="2" height="2"/><rect x="14" y="7" width="2" height="2"/><rect x="8" y="10" width="2" height="2"/><rect x="11" y="10" width="2" height="2"/><rect x="14" y="10" width="2" height="2"/><rect x="8" y="13" width="2" height="2"/><rect x="11" y="13" width="2" height="2"/><rect x="14" y="13" width="2" height="2"/></g><path d="M0.5 0.5 L10.5 0.5 L6.5 4.500 L6.5 8 L4.5 8 L4.5 4.500Z" fill="#ffffc0" stroke="#000" stroke-width="1"/></svg>
<div class="hl" style="left:1020px;top:142px;width:255px;background:#808080"></div><div class="hl" style="left:1020px;top:143px;width:255px;background:#fff"></div>
<div class="sunk" style="left:1025px;top:149px;width:246px;height:21px;background:#b8f090"><div class="sunk2"></div><div class="a" style="left:3px;top:4px;letter-spacing:0.15px">&lt; Любой менеджер &gt;</div>
<div class="rais" style="left:223px;top:1px;width:21px;height:17px;background:#e4e4f0"><svg class="a" style="left:0px;top:0px" width="19" height="15" viewBox="0 0 19 15"><path d="M3.500 6.500 L8 6.500 L9 7.500 L12.500 7.500 L12.500 9 L5.500 9 L3.500 12.500Z" fill="#fff" stroke="#1830b0" stroke-width="1"/><path d="M5.700 9 L15.700 8.700 L13 12.500 L3.500 12.500Z" fill="#6080e8" stroke="#1830b0" stroke-width="1"/><path d="M8.500 2.700 Q11.500 0 14 3.500 M14.800 1.200 L14.500 4.200 L11.800 3.400" stroke="#101860" stroke-width="1.1" fill="none"/></svg></div>
</div>
<div class="sunk" style="left:1025px;top:172px;width:246px;height:21px;background:#fff"><div class="sunk2"></div><div class="a" style="left:3px;top:4px;letter-spacing:0.15px">&lt; Любой тип участия клиента в заявке &gt;</div>
<div class="rais" style="left:223px;top:1px;width:21px;height:17px;background:#e4e4f0"><svg class="a" style="left:0px;top:0px" width="19" height="15" viewBox="0 0 19 15"><path d="M3.500 6.500 L8 6.500 L9 7.500 L12.500 7.500 L12.500 9 L5.500 9 L3.500 12.500Z" fill="#fff" stroke="#1830b0" stroke-width="1"/><path d="M5.700 9 L15.700 8.700 L13 12.500 L3.500 12.500Z" fill="#6080e8" stroke="#1830b0" stroke-width="1"/><path d="M8.500 2.700 Q11.500 0 14 3.500 M14.800 1.200 L14.500 4.200 L11.800 3.400" stroke="#101860" stroke-width="1.1" fill="none"/></svg></div>
</div>
<div class="sunk" style="left:1025px;top:196px;width:246px;height:21px;background:#fff"><div class="sunk2"></div><div class="a" style="left:3px;top:4px;letter-spacing:0.15px">&lt; Любой тип адреса &gt;</div>
<div class="rais" style="left:223px;top:1px;width:21px;height:17px;background:#e4e4f0"><svg class="a" style="left:0px;top:0px" width="19" height="15" viewBox="0 0 19 15"><path d="M3.500 6.500 L8 6.500 L9 7.500 L12.500 7.500 L12.500 9 L5.500 9 L3.500 12.500Z" fill="#fff" stroke="#1830b0" stroke-width="1"/><path d="M5.700 9 L15.700 8.700 L13 12.500 L3.500 12.500Z" fill="#6080e8" stroke="#1830b0" stroke-width="1"/><path d="M8.500 2.700 Q11.500 0 14 3.500 M14.800 1.200 L14.500 4.200 L11.800 3.400" stroke="#101860" stroke-width="1.1" fill="none"/></svg></div>
</div>
<div class="sunk" style="left:1025px;top:219px;width:246px;height:21px;background:#fff"><div class="sunk2"></div><div class="a" style="left:3px;top:4px;letter-spacing:0.15px">&lt; Любой город &gt;</div>
<div class="rais" style="left:223px;top:1px;width:21px;height:17px;background:#e4e4f0"><svg class="a" style="left:0px;top:0px" width="19" height="15" viewBox="0 0 19 15"><path d="M3.500 6.500 L8 6.500 L9 7.500 L12.500 7.500 L12.500 9 L5.500 9 L3.500 12.500Z" fill="#fff" stroke="#1830b0" stroke-width="1"/><path d="M5.700 9 L15.700 8.700 L13 12.500 L3.500 12.500Z" fill="#6080e8" stroke="#1830b0" stroke-width="1"/><path d="M8.500 2.700 Q11.500 0 14 3.500 M14.800 1.200 L14.500 4.200 L11.800 3.400" stroke="#101860" stroke-width="1.1" fill="none"/></svg></div>
</div>
<div class="sunk" style="left:1025px;top:243px;width:246px;height:21px;background:#fff"><div class="sunk2"></div><div class="a" style="left:3px;top:4px;letter-spacing:0.15px">&lt; Любой район города &gt;</div>
<div class="rais" style="left:223px;top:1px;width:21px;height:17px;background:#e4e4f0"><svg class="a" style="left:0px;top:0px" width="19" height="15" viewBox="0 0 19 15"><path d="M3.500 6.500 L8 6.500 L9 7.500 L12.500 7.500 L12.500 9 L5.500 9 L3.500 12.500Z" fill="#fff" stroke="#1830b0" stroke-width="1"/><path d="M5.700 9 L15.700 8.700 L13 12.500 L3.500 12.500Z" fill="#6080e8" stroke="#1830b0" stroke-width="1"/><path d="M8.500 2.700 Q11.500 0 14 3.500 M14.800 1.200 L14.500 4.200 L11.800 3.400" stroke="#101860" stroke-width="1.1" fill="none"/></svg></div>
</div>
<div class="sunk" style="left:1025px;top:266px;width:246px;height:21px;background:#fff"><div class="sunk2"></div><div class="a" style="left:3px;top:4px;letter-spacing:0.15px">&lt; Любая улица &gt;</div>
<div class="rais" style="left:223px;top:1px;width:21px;height:17px;background:#e4e4f0"><svg class="a" style="left:0px;top:0px" width="19" height="15" viewBox="0 0 19 15"><path d="M3.500 6.500 L8 6.500 L9 7.500 L12.500 7.500 L12.500 9 L5.500 9 L3.500 12.500Z" fill="#fff" stroke="#1830b0" stroke-width="1"/><path d="M5.700 9 L15.700 8.700 L13 12.500 L3.500 12.500Z" fill="#6080e8" stroke="#1830b0" stroke-width="1"/><path d="M8.500 2.700 Q11.500 0 14 3.500 M14.800 1.200 L14.500 4.200 L11.800 3.400" stroke="#101860" stroke-width="1.1" fill="none"/></svg></div>
</div>
<div class="sunk" style="left:1025px;top:290px;width:246px;height:21px;background:#fff"><div class="sunk2"></div><div class="a" style="left:3px;top:4px;letter-spacing:0.15px">&lt; Любой транспорт &gt;</div>
<div class="rais" style="left:223px;top:1px;width:21px;height:17px;background:#e4e4f0"><svg class="a" style="left:0px;top:0px" width="19" height="15" viewBox="0 0 19 15"><path d="M3.500 6.500 L8 6.500 L9 7.500 L12.500 7.500 L12.500 9 L5.500 9 L3.500 12.500Z" fill="#fff" stroke="#1830b0" stroke-width="1"/><path d="M5.700 9 L15.700 8.700 L13 12.500 L3.500 12.500Z" fill="#6080e8" stroke="#1830b0" stroke-width="1"/><path d="M8.500 2.700 Q11.500 0 14 3.500 M14.800 1.200 L14.500 4.200 L11.800 3.400" stroke="#101860" stroke-width="1.1" fill="none"/></svg></div>
</div>
<div class="sunk" style="left:1025px;top:313px;width:246px;height:21px;background:#fff"><div class="sunk2"></div><div class="a" style="left:3px;top:4px;letter-spacing:0.15px">&lt; Любое сопровождающее лицо &gt;</div>
<div class="rais" style="left:223px;top:1px;width:21px;height:17px;background:#e4e4f0"><svg class="a" style="left:0px;top:0px" width="19" height="15" viewBox="0 0 19 15"><path d="M3.500 6.500 L8 6.500 L9 7.500 L12.500 7.500 L12.500 9 L5.500 9 L3.500 12.500Z" fill="#fff" stroke="#1830b0" stroke-width="1"/><path d="M5.700 9 L15.700 8.700 L13 12.500 L3.500 12.500Z" fill="#6080e8" stroke="#1830b0" stroke-width="1"/><path d="M8.500 2.700 Q11.500 0 14 3.500 M14.800 1.200 L14.500 4.200 L11.800 3.400" stroke="#101860" stroke-width="1.1" fill="none"/></svg></div>
</div>
<div class="sunk" style="left:1025px;top:337px;width:246px;height:21px;background:#b8f090"><div class="sunk2"></div><div class="a" style="left:3px;top:4px;letter-spacing:0.15px">&lt; Любая группа заявок &gt;</div>
<div class="rais" style="left:223px;top:1px;width:21px;height:17px;background:#e4e4f0"><svg class="a" style="left:0px;top:0px" width="19" height="15" viewBox="0 0 19 15"><path d="M3.500 6.500 L8 6.500 L9 7.500 L12.500 7.500 L12.500 9 L5.500 9 L3.500 12.500Z" fill="#fff" stroke="#1830b0" stroke-width="1"/><path d="M5.700 9 L15.700 8.700 L13 12.500 L3.500 12.500Z" fill="#6080e8" stroke="#1830b0" stroke-width="1"/><path d="M8.500 2.700 Q11.500 0 14 3.500 M14.800 1.200 L14.500 4.200 L11.800 3.400" stroke="#101860" stroke-width="1.1" fill="none"/></svg></div>
</div>
<div class="sunk" style="left:1025px;top:360px;width:246px;height:21px;background:#fff"><div class="sunk2"></div><div class="a" style="left:3px;top:4px;letter-spacing:0.15px">&lt; Любой статус оплаты заявки &gt;</div>
<div class="rais" style="left:228px;top:1px;width:16px;height:17px"><svg class="a" style="left:3px;top:3px" width="9" height="8" viewBox="0 0 9 8"><path d="M0.5 2 L7.5 2 L4 5.5Z" fill="#000"/></svg></div>
</div>
<div class="sunk" style="left:1025px;top:384px;width:246px;height:21px;background:#fff"><div class="sunk2"></div><div class="a" style="left:3px;top:4px;letter-spacing:0.15px">&lt; Любой статус заявки &gt;</div>
<div class="rais" style="left:228px;top:1px;width:16px;height:17px"><svg class="a" style="left:3px;top:3px" width="9" height="8" viewBox="0 0 9 8"><path d="M0.5 2 L7.5 2 L4 5.5Z" fill="#000"/></svg></div>
</div>
<div class="sunk" style="left:1025px;top:407px;width:246px;height:21px;background:#b8f090"><div class="sunk2"></div><div class="a" style="left:3px;top:4px;letter-spacing:0.15px">&lt; И архивные и не архивные заявки &gt;</div>
<div class="rais" style="left:228px;top:1px;width:16px;height:17px"><svg class="a" style="left:3px;top:3px" width="9" height="8" viewBox="0 0 9 8"><path d="M0.5 2 L7.5 2 L4 5.5Z" fill="#000"/></svg></div>
</div>
<div class="grp" style="left:1025px;top:438px;width:247px;height:60px"><span>Оформление заявки</span></div>
<div class="a" style="left:1031px;top:456px">С</div>
<div class="a" style="left:1153px;top:456px">До</div>
<div class="sunk" style="left:1053px;top:451px;width:89px;height:20px;background:#fff"><div class="sunk2"></div><div class="a" style="left:3px;top:4px;color:#808080">03.03.2009</div><div class="rais" style="left:71px;top:2px;width:15px;height:15px"><svg class="a" style="left:2px;top:3px" width="9" height="8" viewBox="0 0 9 8"><path d="M1.5 3 L8.5 3 L5 6.5Z" fill="#fff"/><path d="M0.5 2 L7.5 2 L4 5.5Z" fill="#808080"/></svg></div></div>
<div class="sunk" style="left:1175px;top:451px;width:89px;height:20px;background:#fff"><div class="sunk2"></div><div class="a" style="left:3px;top:4px;color:#808080">03.03.2009</div><div class="rais" style="left:71px;top:2px;width:15px;height:15px"><svg class="a" style="left:2px;top:3px" width="9" height="8" viewBox="0 0 9 8"><path d="M1.5 3 L8.5 3 L5 6.5Z" fill="#fff"/><path d="M0.5 2 L7.5 2 L4 5.5Z" fill="#808080"/></svg></div></div>
<div class="sunk" style="left:1053px;top:479px;width:13px;height:13px;background:#fff"><div class="sunk2"></div></div>
<div class="a" style="left:1070px;top:479px;letter-spacing:0.1px">Учитывать при фильтрации</div>
<div class="grp" style="left:1025px;top:506px;width:247px;height:60px"><span>Необходимо выполнить</span></div>
<div class="a" style="left:1031px;top:524px">С</div>
<div class="a" style="left:1153px;top:524px">До</div>
<div class="sunk" style="left:1053px;top:519px;width:89px;height:20px;background:#fff"><div class="sunk2"></div><div class="a" style="left:3px;top:4px;color:#808080">03.03.2009</div><div class="rais" style="left:71px;top:2px;width:15px;height:15px"><svg class="a" style="left:2px;top:3px" width="9" height="8" viewBox="0 0 9 8"><path d="M1.5 3 L8.5 3 L5 6.5Z" fill="#fff"/><path d="M0.5 2 L7.5 2 L4 5.5Z" fill="#808080"/></svg></div></div>
<div class="sunk" style="left:1175px;top:519px;width:89px;height:20px;background:#fff"><div class="sunk2"></div><div class="a" style="left:3px;top:4px;color:#808080">03.03.2009</div><div class="rais" style="left:71px;top:2px;width:15px;height:15px"><svg class="a" style="left:2px;top:3px" width="9" height="8" viewBox="0 0 9 8"><path d="M1.5 3 L8.5 3 L5 6.5Z" fill="#fff"/><path d="M0.5 2 L7.5 2 L4 5.5Z" fill="#808080"/></svg></div></div>
<div class="sunk" style="left:1053px;top:547px;width:13px;height:13px;background:#fff"><div class="sunk2"></div></div>
<div class="a" style="left:1070px;top:547px;letter-spacing:0.1px">Учитывать при фильтрации</div>
<div class="grp" style="left:1025px;top:575px;width:247px;height:60px"><span>Фактически выполнено</span></div>
<div class="a" style="left:1031px;top:593px">С</div>
<div class="a" style="left:1153px;top:593px">До</div>
<div class="sunk" style="left:1053px;top:588px;width:89px;height:20px;background:#fff"><div class="sunk2"></div><div class="a" style="left:3px;top:4px;color:#808080">03.03.2009</div><div class="rais" style="left:71px;top:2px;width:15px;height:15px"><svg class="a" style="left:2px;top:3px" width="9" height="8" viewBox="0 0 9 8"><path d="M1.5 3 L8.5 3 L5 6.5Z" fill="#fff"/><path d="M0.5 2 L7.5 2 L4 5.5Z" fill="#808080"/></svg></div></div>
<div class="sunk" style="left:1175px;top:588px;width:89px;height:20px;background:#fff"><div class="sunk2"></div><div class="a" style="left:3px;top:4px;color:#808080">03.03.2009</div><div class="rais" style="left:71px;top:2px;width:15px;height:15px"><svg class="a" style="left:2px;top:3px" width="9" height="8" viewBox="0 0 9 8"><path d="M1.5 3 L8.5 3 L5 6.5Z" fill="#fff"/><path d="M0.5 2 L7.5 2 L4 5.5Z" fill="#808080"/></svg></div></div>
<div class="sunk" style="left:1053px;top:616px;width:13px;height:13px;background:#fff"><div class="sunk2"></div></div>
<div class="a" style="left:1070px;top:616px;letter-spacing:0.1px">Учитывать при фильтрации</div>
<div class="grp" style="left:1025px;top:644px;width:247px;height:60px"><span>Полная оплата заявки</span></div>
<div class="a" style="left:1031px;top:662px">С</div>
<div class="a" style="left:1153px;top:662px">До</div>
<div class="sunk" style="left:1053px;top:657px;width:89px;height:20px;background:#fff"><div class="sunk2"></div><div class="a" style="left:3px;top:4px;color:#808080">03.03.2009</div><div class="rais" style="left:71px;top:2px;width:15px;height:15px"><svg class="a" style="left:2px;top:3px" width="9" height="8" viewBox="0 0 9 8"><path d="M1.5 3 L8.5 3 L5 6.5Z" fill="#fff"/><path d="M0.5 2 L7.5 2 L4 5.5Z" fill="#808080"/></svg></div></div>
<div class="sunk" style="left:1175px;top:657px;width:89px;height:20px;background:#fff"><div class="sunk2"></div><div class="a" style="left:3px;top:4px;color:#808080">03.03.2009</div><div class="rais" style="left:71px;top:2px;width:15px;height:15px"><svg class="a" style="left:2px;top:3px" width="9" height="8" viewBox="0 0 9 8"><path d="M1.5 3 L8.5 3 L5 6.5Z" fill="#fff"/><path d="M0.5 2 L7.5 2 L4 5.5Z" fill="#808080"/></svg></div></div>
<div class="sunk" style="left:1053px;top:685px;width:13px;height:13px;background:#fff"><div class="sunk2"></div></div>
<div class="a" style="left:1070px;top:685px;letter-spacing:0.1px">Учитывать при фильтрации</div>
<div class="hl" style="left:4px;top:632px;width:1015px;background:#a0a0a0"></div><div class="hl" style="left:4px;top:634px;width:1015px;background:#808080"></div><div class="hl" style="left:4px;top:635px;width:1015px;height:2px;background:#fff"></div>
<div class="gbar" style="left:4px;top:637px;width:1016px">Список товаров и услуг для выбранной заявки</div>
<svg class="a" style="left:4px;top:638px" width="15" height="16" viewBox="0 0 15 16"><rect x="5" y="0" width="8" height="4" fill="#30a8a8"/><rect x="6" y="4" width="7" height="3" fill="#f0f8ff"/><rect x="7" y="8" width="6" height="3" fill="#30b0a8"/><rect x="8" y="11" width="6" height="3" fill="#e8fcff"/><path d="M0 3.500 L2 3.500 L5 5.500 L2 7.500 L0 7.500Z M0 10.500 L3 10.500 L6 12.500 L3 14.500 L0 14.500Z" fill="#007040"/><path d="M1 2 L7 12" stroke="#203838" stroke-width="0.8"/></svg>
<div class="sunk" style="left:4px;top:656px;width:1016px;height:119px;background:#fff;border-top-color:#404040"><div class="sunk2" style="border-top-width:0"></div></div>
<div class="hd s" style="left:6px;top:657px;width:12px"></div>
<div class="hd b s" style="left:18px;top:657px;width:141px;">Группа номенклатуры</div>
<div class="hd  s" style="left:159px;top:657px;width:39px;">Код...</div>
<div class="hd b s" style="left:198px;top:657px;width:110px;">Товар / услуга</div>
<div class="hd  s" style="left:308px;top:657px;width:50px;">Артикул</div>
<div class="hd  s" style="left:358px;top:657px;width:77px;">Цена</div>
<div class="hd  s" style="left:435px;top:657px;width:75px;">Скидка</div>
<div class="hd  s" style="left:510px;top:657px;width:81px;">Цена со ски...</div>
<div class="hd  s" style="left:591px;top:657px;width:43px;">Кол-во</div>
<div class="hd  s" style="left:634px;top:657px;width:74px;">Сумма</div>
<div class="hd  s" style="left:708px;top:657px;width:62px;">Масса, кг</div>
<div class="sel">
<div class="ind" style="left:6px;top:675px;width:12px;height:17px"></div><svg class="a" style="left:8px;top:677px" width="7" height="12" viewBox="0 0 7 12"><path d="M1 0.5 L6.5 6 L1 11.5Z" fill="#000"/></svg>
<div class="c s " style="left:18px;top:675px;width:141px">полиупак</div>
<div class="c s " style="left:159px;top:675px;width:39px"></div>
<div class="c s " style="left:198px;top:675px;width:110px">пробойник</div>
<div class="c s " style="left:308px;top:675px;width:50px"></div>
<div class="c s rt" style="left:358px;top:675px;width:77px">480,00 р</div>
<div class="c s ctr" style="left:435px;top:675px;width:75px">0,00 %</div>
<div class="c s rt" style="left:510px;top:675px;width:81px">0,00 р</div>
<div class="c s ctr" style="left:591px;top:675px;width:43px">1</div>
<div class="c s rt" style="left:634px;top:675px;width:74px">0,00 р</div>
<div class="c s rt" style="left:708px;top:675px;width:62px">0 кг</div>
</div>
<div class="hl" style="left:4px;top:776px;width:1015px;background:#a0a0a0"></div><div class="hl" style="left:4px;top:778px;width:1015px;background:#808080"></div><div class="hl" style="left:4px;top:779px;width:1015px;height:2px;background:#fff"></div>
<div class="gbar" style="left:4px;top:781px;width:1016px">Список клиентов для выбранной заявки</div>
<svg class="a" style="left:4px;top:782px" width="15" height="16" viewBox="0 0 15 16"><rect x="5" y="0" width="8" height="4" fill="#30a8a8"/><rect x="6" y="4" width="7" height="3" fill="#f0f8ff"/><rect x="7" y="8" width="6" height="3" fill="#30b0a8"/><rect x="8" y="11" width="6" height="3" fill="#e8fcff"/><path d="M0 3.500 L2 3.500 L5 5.500 L2 7.500 L0 7.500Z M0 10.500 L3 10.500 L6 12.500 L3 14.500 L0 14.500Z" fill="#007040"/><path d="M1 2 L7 12" stroke="#203838" stroke-width="0.8"/></svg>
<div class="sunk" style="left:4px;top:800px;width:811px;height:173px;background:#fff;border-top-color:#404040"><div class="sunk2" style="border-top-width:0"></div></div>
<div class="vl" style="left:815px;top:800px;height:173px;background:#808080"></div><div class="vl" style="left:816px;top:800px;height:173px;background:#fff"></div>
<div class="vl" style="left:817px;top:800px;height:173px;background:#808080"></div><div class="vl" style="left:818px;top:800px;height:173px;background:#fff"></div>
<div class="hd s" style="left:6px;top:801px;width:12px"></div>
<div class="hd  s" style="left:18px;top:801px;width:30px;">ОПФ</div>
<div class="hd b s" style="left:48px;top:801px;width:92px;">Клиент</div>
<div class="hd  s" style="left:140px;top:801px;width:111px;">Тип участия</div>
<div class="hd  s" style="left:251px;top:801px;width:44px;">Плат...</div>
<div class="hd  s" style="left:295px;top:801px;width:29px;">И...</div>
<div class="hd  s" style="left:324px;top:801px;width:66px;">Город</div>
<div class="hd  s" style="left:390px;top:801px;width:60px;">Район</div>
<div class="hd  s" style="left:450px;top:801px;width:58px;">Улица</div>
<div class="hd  s" style="left:508px;top:801px;width:27px;">Дом</div>
<div class="sel">
<div class="ind" style="left:6px;top:819px;width:12px;height:17px"></div><svg class="a" style="left:8px;top:821px" width="7" height="12" viewBox="0 0 7 12"><path d="M1 0.5 L6.5 6 L1 11.5Z" fill="#000"/></svg>
<div class="c s " style="left:18px;top:819px;width:30px;padding-top:2px;border-top:1px dotted #c0c0c0;border-bottom:1px dotted #c0c0c0">ООО</div>
<div class="c s " style="left:48px;top:819px;width:92px;padding-top:2px;border-top:1px dotted #c0c0c0;border-bottom:1px dotted #c0c0c0">Г</div>
<div class="c s " style="left:140px;top:819px;width:111px;padding-top:2px;border-top:1px dotted #c0c0c0;border-bottom:1px dotted #c0c0c0">Покупатель</div>
<div class="c s ctr" style="left:251px;top:819px;width:44px;padding-top:2px;border-top:1px dotted #c0c0c0;border-bottom:1px dotted #c0c0c0">Да</div>
<div class="c s " style="left:295px;top:819px;width:29px;padding-top:2px;border-top:1px dotted #c0c0c0;border-bottom:1px dotted #c0c0c0">6</div>
<div class="c s " style="left:324px;top:819px;width:66px;padding-top:2px;border-top:1px dotted #c0c0c0;border-bottom:1px dotted #c0c0c0"></div>
<div class="c s " style="left:390px;top:819px;width:60px;padding-top:2px;border-top:1px dotted #c0c0c0;border-bottom:1px dotted #c0c0c0"></div>
<div class="c s " style="left:450px;top:819px;width:58px;padding-top:2px;border-top:1px dotted #c0c0c0;border-bottom:1px dotted #c0c0c0"></div>
<div class="c s " style="left:508px;top:819px;width:27px;padding-top:2px;border-top:1px dotted #c0c0c0;border-bottom:1px dotted #c0c0c0"></div>
</div>
<div class="yl" style="left:53px;top:825px;width:55px;height:11px;border-radius:1px"></div>
<div class="yl" style="left:300px;top:822px;width:22px;height:13px"></div>
<div class="sunk" style="left:820px;top:800px;width:200px;height:110px;background:#fff;border-top-color:#404040"><div class="sunk2" style="border-top-width:0"></div></div>
<div class="hd s" style="left:822px;top:801px;width:12px"></div>
<div class="hd b s" style="left:834px;top:801px;width:97px;">Дата оплаты</div>
<div class="hd  s" style="left:931px;top:801px;width:77px;">Сумма (руб.)</div>
<div class="sel">
<div class="ind" style="left:822px;top:819px;width:12px;height:17px"></div><svg class="a" style="left:824px;top:821px" width="7" height="12" viewBox="0 0 7 12"><path d="M1 0.5 L6.5 6 L1 11.5Z" fill="#000"/></svg>
<div class="c s" style="left:834px;top:819px;width:97px">01.03.2017</div>
<div class="c s rt" style="left:931px;top:819px;width:77px;padding-right:12px">50115,50</div>
</div>
<div class="yl" style="left:948px;top:826px;width:58px;height:10px;border-radius:0"></div>
<div class="hl" style="left:820px;top:911px;width:200px;background:#808080"></div><div class="hl" style="left:820px;top:912px;width:200px;background:#fff"></div>
<div class="sunk" style="left:820px;top:915px;width:200px;height:58px;background:#ffffe1"><div class="sunk2"></div></div>
<div class="sbtrack" style="left:1002px;top:917px;width:16px;height:54px"></div>
<div class="rais" style="left:1002px;top:917px;width:16px;height:16px"><svg class="a" style="left:3px;top:3px" width="9" height="8" viewBox="0 0 9 8"><path d="M1.5 6.5 L5 3 L8.5 6.5Z" fill="#fff"/><path d="M0.5 5.5 L4 2 L7.5 5.5Z" fill="#808080"/></svg></div>
<div class="rais" style="left:1002px;top:955px;width:16px;height:16px"><svg class="a" style="left:3px;top:4px" width="9" height="8" viewBox="0 0 9 8"><path d="M1.5 3 L8.5 3 L5 6.5Z" fill="#fff"/><path d="M0.5 2 L7.5 2 L4 5.5Z" fill="#808080"/></svg></div>
<div class="sunk" style="left:0;top:979px;width:268px;height:18px"></div>
<div class="a" style="left:2px;top:982px">Пользователь : ADM (Администратор комплекса)</div>
<div class="sunk" style="left:270px;top:979px;width:1008px;height:18px"></div>
<div class="a" style="left:273px;top:982px">База данных: C:\Program Files\Orders\Base\Orders.fdb</div>
</div></body></html>
